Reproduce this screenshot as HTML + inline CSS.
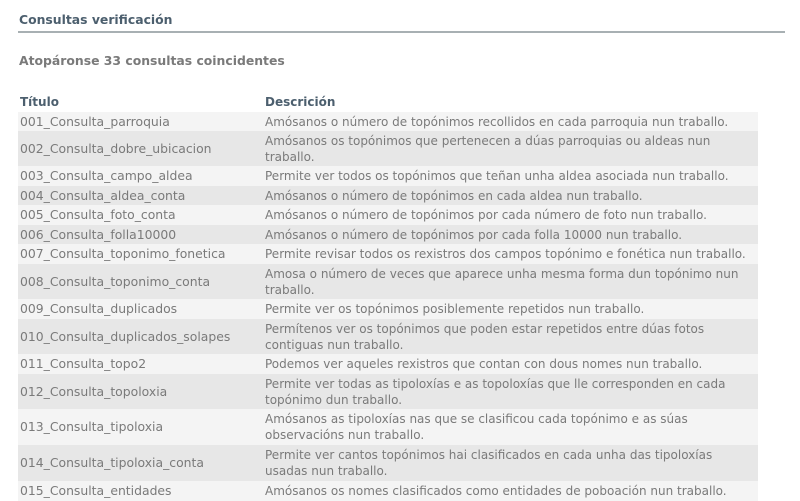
<!DOCTYPE html>
<html><head><meta charset="utf-8"><style>
body{margin:0;width:800px;height:500px;overflow:hidden;background:#fff;font-family:Verdana,"DejaVu Sans",sans-serif;color:#7a7a7a;}
h1{position:absolute;left:19px;top:12px;margin:0;font-size:12.4px;font-weight:bold;color:#4c5f6e;}
.line{position:absolute;left:18px;top:31px;width:767px;height:2px;background:#a8b0b3;}
h2{position:absolute;left:19px;top:53px;margin:0;font-size:12.4px;font-weight:bold;color:#7a7a7a;}
.r{position:absolute;left:18px;width:740px;font-size:12px;line-height:16px;white-space:nowrap;}
.r div{position:absolute;top:50%;transform:translateY(-50%);}
.t{left:2px;font-size:12.4px;}
.d{left:247px;width:490px;}
.o{background:#f4f4f4}.e{background:#e7e7e7}
.hd{font-weight:bold;color:#4c5f6e;font-size:12px;}
</style></head><body>
<h1>Consultas verificación</h1><div class="line"></div>
<h2>Atopáronse 33 consultas coincidentes</h2>
<div class="r hd" style="top:93px;height:18px"><div class="t" style="font-size:12px">Título</div><div class="d">Descrición</div></div>
<div class="r o" style="top:112px;height:19px"><div class="t">001_Consulta_parroquia</div><div class="d">Amósanos o número de topónimos recollidos en cada parroquia nun traballo.</div></div>
<div class="r e" style="top:131px;height:35px"><div class="t">002_Consulta_dobre_ubicacion</div><div class="d">Amósanos os topónimos que pertenecen a dúas parroquias ou aldeas nun<br>traballo.</div></div>
<div class="r o" style="top:166px;height:20px"><div class="t">003_Consulta_campo_aldea</div><div class="d">Permite ver todos os topónimos que teñan unha aldea asociada nun traballo.</div></div>
<div class="r e" style="top:186px;height:19px"><div class="t">004_Consulta_aldea_conta</div><div class="d">Amósanos o número de topónimos en cada aldea nun traballo.</div></div>
<div class="r o" style="top:205px;height:20px"><div class="t">005_Consulta_foto_conta</div><div class="d">Amósanos o número de topónimos por cada número de foto nun traballo.</div></div>
<div class="r e" style="top:225px;height:19px"><div class="t">006_Consulta_folla10000</div><div class="d">Amósanos o número de topónimos por cada folla 10000 nun traballo.</div></div>
<div class="r o" style="top:244px;height:20px"><div class="t">007_Consulta_toponimo_fonetica</div><div class="d">Permite revisar todos os rexistros dos campos topónimo e fonética nun traballo.</div></div>
<div class="r e" style="top:264px;height:35px"><div class="t">008_Consulta_toponimo_conta</div><div class="d">Amosa o número de veces que aparece unha mesma forma dun topónimo nun<br>traballo.</div></div>
<div class="r o" style="top:299px;height:20px"><div class="t">009_Consulta_duplicados</div><div class="d">Permite ver os topónimos posiblemente repetidos nun traballo.</div></div>
<div class="r e" style="top:319px;height:35px"><div class="t">010_Consulta_duplicados_solapes</div><div class="d">Permítenos ver os topónimos que poden estar repetidos entre dúas fotos<br>contiguas nun traballo.</div></div>
<div class="r o" style="top:354px;height:20px"><div class="t">011_Consulta_topo2</div><div class="d">Podemos ver aqueles rexistros que contan con dous nomes nun traballo.</div></div>
<div class="r e" style="top:374px;height:35px"><div class="t">012_Consulta_topoloxia</div><div class="d">Permite ver todas as tipoloxías e as topoloxías que lle corresponden en cada<br>topónimo dun traballo.</div></div>
<div class="r o" style="top:409px;height:36px"><div class="t">013_Consulta_tipoloxia</div><div class="d">Amósanos as tipoloxías nas que se clasificou cada topónimo e as súas<br>observacións nun traballo.</div></div>
<div class="r e" style="top:445px;height:36px"><div class="t">014_Consulta_tipoloxia_conta</div><div class="d">Permite ver cantos topónimos hai clasificados en cada unha das tipoloxías<br>usadas nun traballo.</div></div>
<div class="r o" style="top:481px;height:20px"><div class="t">015_Consulta_entidades</div><div class="d">Amósanos os nomes clasificados como entidades de poboación nun traballo.</div></div>
</body></html>
